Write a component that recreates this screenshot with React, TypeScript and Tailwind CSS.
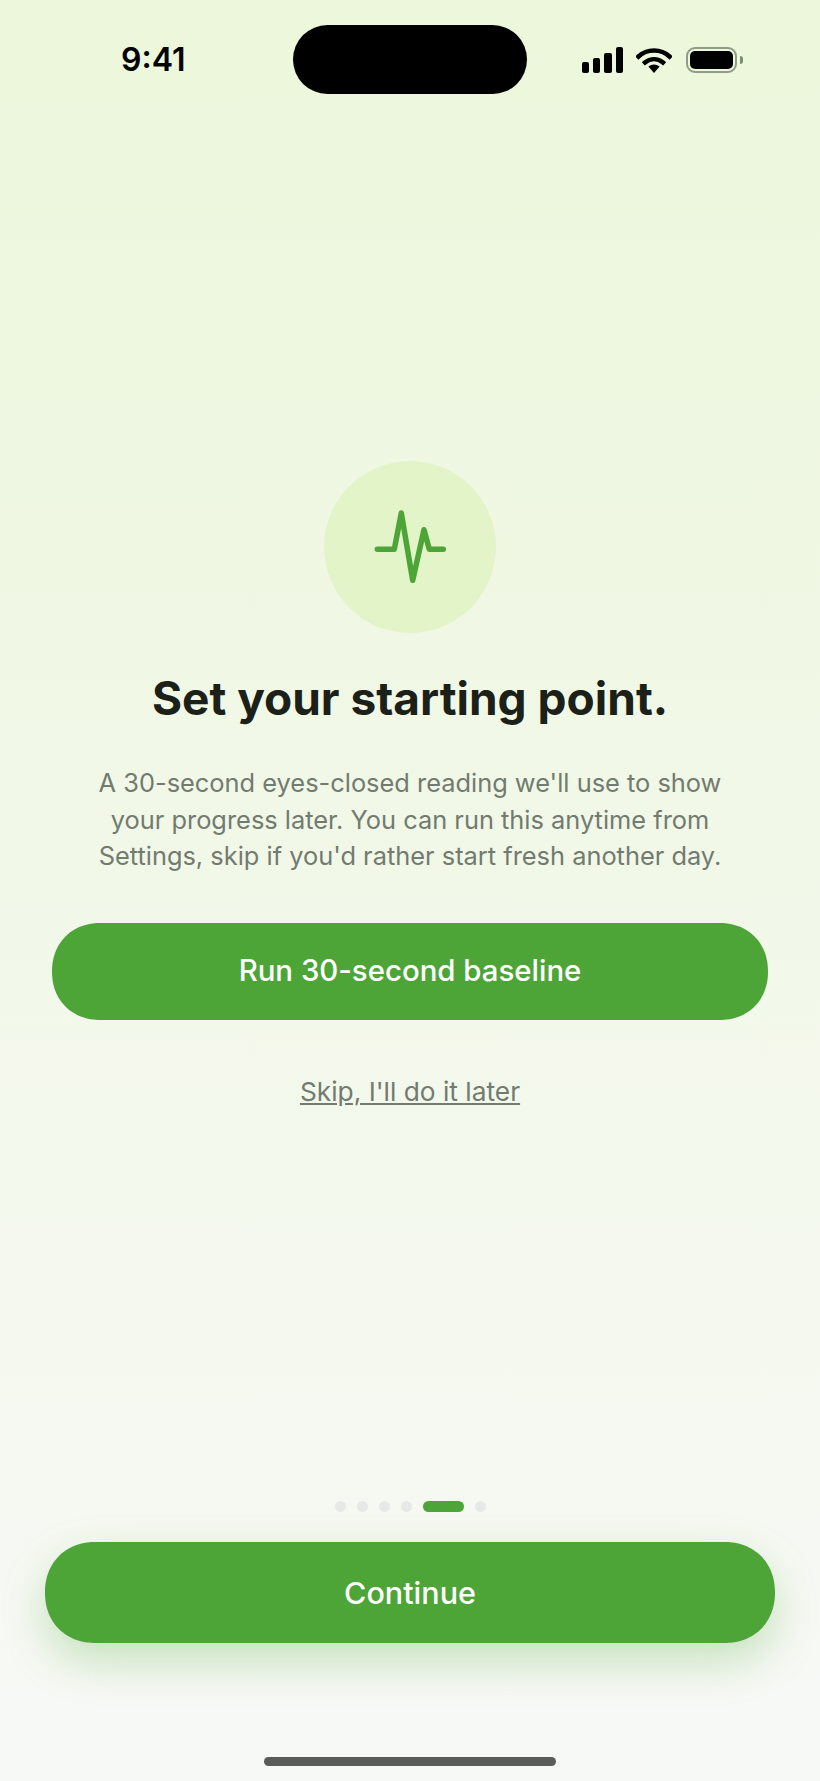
import React from 'react';

const PageDots = () => (
  <div className="flex items-center justify-center gap-[11px]">
    <span className="h-[11px] w-[11px] rounded-full bg-[#e6e9e5]" />
    <span className="h-[11px] w-[11px] rounded-full bg-[#e6e9e5]" />
    <span className="h-[11px] w-[11px] rounded-full bg-[#e6e9e5]" />
    <span className="h-[11px] w-[11px] rounded-full bg-[#e6e9e5]" />
    <span className="h-[11px] w-[41px] rounded-full bg-[#4ea537]" />
    <span className="h-[11px] w-[11px] rounded-full bg-[#e6e9e5]" />
  </div>
);

const StatusBar = () => (
  <div className="flex h-[94px] items-start pt-[25px]">
    <div className="flex h-[69px] w-[293px] items-center pl-[121px] text-[32px] font-semibold leading-none text-black">
      9:41
    </div>
    <div className="h-[69px] w-[234px] rounded-[35px] bg-black" />
    <div className="flex h-[69px] items-center pl-[55px]">
      <svg width="41" height="26" viewBox="0 0 41 26" fill="black">
        <rect x="0" y="15" width="7" height="11" rx="2" />
        <rect x="11" y="11" width="7" height="15" rx="2" />
        <rect x="22" y="6" width="8" height="20" rx="2" />
        <rect x="34" y="0" width="7" height="26" rx="2" />
      </svg>
      <svg width="36" height="26" viewBox="0 0 36 26" fill="none" className="ml-[13px]">
        <path d="M2.5 9.5C11 1.5 25 1.5 33.5 9.5" stroke="black" strokeWidth="4.6" strokeLinecap="square" />
        <path d="M9 15.5C14 11 22 11 27 15.5" stroke="black" strokeWidth="4.4" strokeLinecap="square" />
        <path d="M12.4 19.6C15.8 16.8 20.2 16.8 23.6 19.6L18 26Z" fill="black" />
      </svg>
      <div className="ml-[14px] flex items-center gap-[3px]">
        <div className="flex h-[26px] w-[51px] items-center justify-center rounded-[9px] border-2 border-[#8f9c88]">
          <div className="h-[18px] w-[43px] rounded-[5px] bg-black" />
        </div>
        <div className="h-[8px] w-[3px] rounded-r-full bg-[#7e8a78]" />
      </div>
    </div>
  </div>
);

export default function App() {
  return (
    <div className="flex h-[1781px] w-[820px] flex-col bg-gradient-to-b from-[#ecf7db] to-[#f7f9f6] font-['Inter',sans-serif]">
      <StatusBar />

      <div className="mt-[367px] flex flex-col items-center">
        <div className="flex h-[172px] w-[172px] items-center justify-center rounded-full bg-[#e2f4c8]">
          <svg width="80" height="80" viewBox="0 0 80 80" fill="none" className="mt-[3px]">
            <path
              d="M7.3 40.3H24.3L31.3 4L42.7 71.3L54 20.7L59.3 40.3H73.3"
              stroke="#4ea537"
              strokeWidth="5.5"
              strokeLinecap="round"
              strokeLinejoin="round"
            />
          </svg>
        </div>

        <h1 className="mt-[37px] text-[46px] font-bold leading-[56px] text-[#1b2118]">Set your starting point.</h1>

        <p className="mt-[39px] w-[680px] text-center text-[25.4px] leading-[36.5px] text-[#727b70]">
          A 30-second eyes-closed reading we'll use to show
          <br />
          your progress later. You can run this anytime from
          <br />
          Settings, skip if you'd rather start fresh another day.
        </p>

        <button className="mt-[48px] flex h-[97px] w-[716px] items-center justify-center rounded-[48px] bg-[#4ea537] text-[29.4px] font-medium text-white [corner-shape:superellipse(1.08)]">
          Run 30-second baseline
        </button>

        <a className="mt-[56px] text-[26.3px] leading-[32px] text-[#727b70] underline">Skip, I'll do it later</a>
      </div>

      <div className="mt-auto flex flex-col items-center">
        <PageDots />
        <button className="mt-[30px] flex h-[101px] w-[730px] items-center justify-center rounded-[50px] bg-[#4ea537] text-[30.5px] font-medium text-white shadow-[0_18px_44px_rgba(78,165,55,0.28)] [corner-shape:superellipse(1.08)]">
          Continue
        </button>
        <div className="mb-[15px] mt-[114px] h-[9px] w-[292px] rounded-full bg-[#5a5c5a]" />
      </div>
    </div>
  );
}
